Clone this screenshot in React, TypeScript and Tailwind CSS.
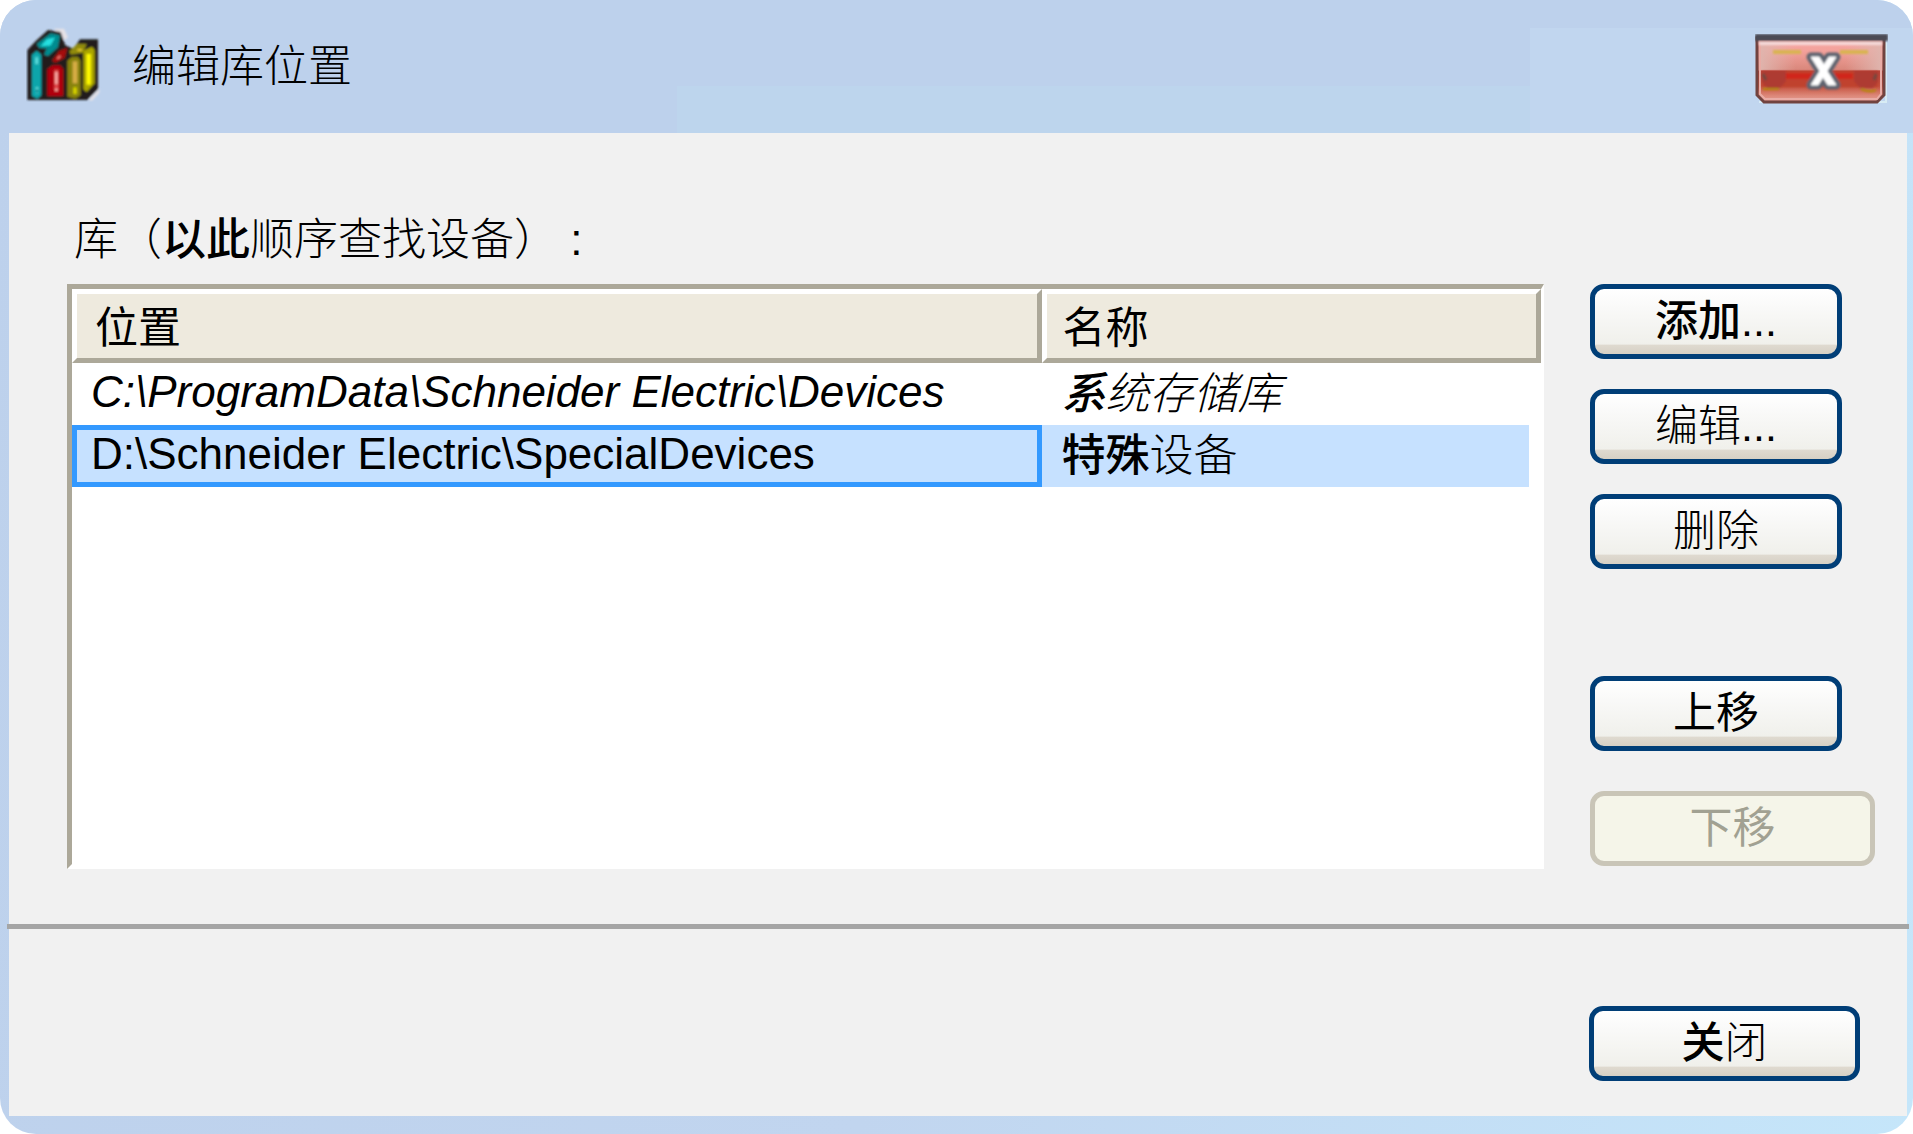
import type { ReactNode } from 'react';
import clsx from 'clsx';

interface Library {
  location: string;
  name: ReactNode;
  system?: boolean; // system repository, shown in italics
}

const LIBRARIES: Library[] = [
  {
    location: 'C:\\ProgramData\\Schneider Electric\\Devices',
    name: <><Strong>系</Strong>统存储库</>,
    system: true,
  },
  {
    location: 'D:\\Schneider Electric\\SpecialDevices',
    name: <><Strong>特殊</Strong>设备</>,
  },
];

const SELECTED = 1;

function Strong({ children }: { children: ReactNode }) {
  return <span className="font-medium">{children}</span>;
}

function BooksIcon() {
  return (
    <svg width="76" height="76" viewBox="34 18 228 228" aria-hidden="true">
      <defs>
        <filter id="soft" x="-10%" y="-10%" width="120%" height="120%">
          <feGaussianBlur stdDeviation="2.5" />
        </filter>
      </defs>
      <g filter="url(#soft)">
        <path d="M118 26h30l12 26-10 8zM222 240l32-34v12l-22 24z" fill="#e6e2e6" />
        <path d="M38 90l26-28 36-32 38 6 14 40 24 10 20-28h54v150l-32 32H38z" fill="#211f1a" />
        {/* teal book */}
        <path d="M66 72l42-32 28 6-6 36-30 26-12-4 8-18-22-2z" fill="#068c90" />
        <path d="M84 76l14-16 18-4-10 18z" fill="#25e0e0" stroke="#25e0e0" strokeWidth="5" />
        <path d="M52 104l14-12 14 12v122l-12 10-16-8z" fill="#07a5aa" />
        <path d="M66 112v20M67 202v18" stroke="#65e8e5" strokeWidth="7" />
        <path d="M67 206l4 6-4 8-4-8z" fill="#077b84" />
        {/* red book */}
        <path d="M112 122l22-30 24-8-8 30-28 14z" fill="#a40808" />
        <path d="M128 116l9-8" stroke="#f47b72" strokeWidth="6" />
        <path d="M98 148l16-12h22l10 12v80H98z" fill="#b00508" />
        <path d="M125 150v62" stroke="#e2494b" strokeWidth="12" />
        <path d="M125 156v36M125 206v8" stroke="#ffc0b9" strokeWidth="6" />
        {/* yellow books */}
        <path d="M164 94l24-22h28l-10 26-38 6z" fill="#918b08" />
        <path d="M188 90h14" stroke="#e0c42c" strokeWidth="7" />
        <path d="M158 122l14-12h18l8 12v104l-16 10-24-6z" fill="#88830b" />
        <path d="M181 124v66" stroke="#d7ad45" strokeWidth="14" />
        <path d="M181 202v20" stroke="#d9d600" strokeWidth="10" />
        <path d="M206 92l26-12 8 10v100l-24 26-10-8z" fill="#aaa501" />
        <path d="M222 102v92" stroke="#fff900" strokeWidth="13" />
      </g>
    </svg>
  );
}

function CloseGlyph() {
  return (
    <svg width="133" height="70" viewBox="0 0 133 70" aria-hidden="true">
      <defs>
        <linearGradient id="gloss" x1="0" y1="0" x2="0" y2="1">
          <stop offset="0" stopColor="#f8a8a6" />
          <stop offset=".2" stopColor="#f3a19b" />
          <stop offset=".5" stopColor="#d9877b" />
          <stop offset=".52" stopColor="#b84136" />
          <stop offset=".75" stopColor="#c4503d" />
          <stop offset=".9" stopColor="#dc8778" />
          <stop offset="1" stopColor="#e6a19a" />
        </linearGradient>
        <linearGradient id="edge" x1="0" y1="0" x2="1" y2="0">
          <stop offset="0" stopColor="#dfb5ae" />
          <stop offset=".3" stopColor="#dfb5ae" stopOpacity="0" />
          <stop offset=".7" stopColor="#dfb5ae" stopOpacity="0" />
          <stop offset="1" stopColor="#dfb5ae" />
        </linearGradient>
        <filter id="haze" x="-10%" y="-10%" width="120%" height="120%">
          <feGaussianBlur stdDeviation=".8" />
        </filter>
      </defs>
      <path d="M131 8v60H4" fill="none" stroke="#d8ecf4" strokeWidth="2" />
      <path d="M2 4h127v57l-7 7H9l-7-7z" fill="url(#gloss)" stroke="#71433f" strokeWidth="3" />
      <path d="M4 8h123v28H4z" fill="url(#edge)" />
      <path d="M5 8v52l5 5h112l4-5V8" fill="none" stroke="#e9aca5" strokeWidth="2" />
      <g filter="url(#haze)">
        <path d="M0 0h133v7H0z" fill="#4b4c54" />
        <path d="M4 8h123v3H4z" fill="#f6dcdc" />
        <path d="M18 18h28M85 18h28" stroke="#d9b451" strokeWidth="4" />
        <path d="M7 37h116v16H7z" fill="#c0432f" />
        <path d="M30 39h68v6H30z" fill="#d0281d" />
        <path d="M7 37h24v10l-6 7H12l-5-6zM123 37H99v10l6 7h13l5-6z" fill="#ae3b31" />
        <path d="M8 55h16M106 55q10 4 15 1" fill="none" stroke="#b08d00" strokeWidth="2" />
        <path d="M8 40l3 6M121 40l-2 6" stroke="#70493f" strokeWidth="3" />
        <path
          d="M56 23h8l5 8 5-8h7l-9 14 9 14h-8l-5-8-5 8h-7l9-14z"
          fill="#5f6470"
          stroke="#5f6470"
          strokeWidth="9"
          strokeLinejoin="round"
        />
        <path
          d="M56 23h8l5 8 5-8h7l-9 14 9 14h-8l-5-8-5 8h-7l9-14z"
          fill="#fff"
          stroke="#fff"
          strokeWidth="1"
        />
      </g>
    </svg>
  );
}

function DialogButton({ children, className, disabled }: {
  children: ReactNode;
  className?: string;
  disabled?: boolean;
}) {
  return (
    <button
      type="button"
      disabled={disabled}
      className={clsx(
        'h-[75px] rounded-[14px] border-5 pb-px text-[43px] leading-none',
        disabled
          ? 'border-[#c9c5b7] bg-[#f5f5e9] text-[#a1a192]'
          : 'border-[#003e77] bg-[linear-gradient(#ffffff,#f9f9f8_30%,#f0f0eb_85%,#dfdad0_86%,#d6d0c4)]',
        className,
      )}
    >
      {children}
    </button>
  );
}

export default function App() {
  return (
    <div className="min-h-screen bg-white font-['Liberation_Sans','Noto_Sans_CJK_SC',sans-serif] font-light text-black" lang="zh-CN">
      <div className="flex min-h-screen flex-col rounded-[36px] bg-[linear-gradient(100deg,#bdd1ec,#c1d5ef_50%,#c5e6fa)] pr-1.5 pb-[18px] pl-[9px]">
        {/* Title bar */}
        <header className="-mr-1.5 -ml-[9px] flex h-[133px] rounded-t-[36px] bg-[linear-gradient(#c1d6ef,#c1d6ef),linear-gradient(#bdd5ed,#bdd5ed),linear-gradient(#bdd1ec,#bdd1ec)] bg-[size:383px_105px,1236px_47px,100%_100%] bg-[position:right_bottom] bg-no-repeat pr-[25px] pl-[26px]">
          <div className="flex flex-1 gap-[30px] pt-[26px]">
            <BooksIcon />
            <h1 className="pt-2 text-[44px] leading-[66px] font-light">编辑库位置</h1>
          </div>
          <button type="button" aria-label="关闭窗口" className="mt-[34px] h-[70px]">
            <CloseGlyph />
          </button>
        </header>

        <main className="flex flex-1 flex-col bg-[#f1f1f1]">
          <div className="flex flex-1 flex-col pr-8 pb-[55px] pl-[58px]">
            <h2 id="libraries" className="pt-[75px] pb-3 pl-[7px] text-[44px] leading-[64px] font-light">
              库（<Strong>以此</Strong>顺序查找设备） :
            </h2>

            <div className="flex flex-1 gap-[46px]">
              <div className="flex-1 border-5 border-r-[3px] border-white border-t-[#aca899] border-l-[#aca899] bg-white">
                <table aria-labelledby="libraries" className="w-full table-fixed border-separate border-spacing-0 text-left text-[44px] leading-none whitespace-nowrap">
                  <colgroup>
                    <col className="w-[66%]" />
                    <col />
                  </colgroup>
                  <thead>
                    <tr className="bg-[#eeeade] text-[43px]">
                      <th className="h-[74px] border-5 border-[#aca899] border-t-white border-l-white pt-1 pl-4.5 font-normal">位置</th>
                      <th className="h-[74px] border-5 border-[#aca899] border-t-white border-l-white pt-1 pl-4 font-normal">名称</th>
                    </tr>
                  </thead>
                  <tbody>
                    {LIBRARIES.map((lib, i) => (
                      <tr key={lib.location} className={clsx(lib.system && 'italic')}>
                        <td className="p-0">
                          <div className={clsx('flex h-[62px] items-center border-5 pb-1 pl-3.5', i === SELECTED ? 'border-[#3399ff] bg-[#c6e1ff]' : 'border-transparent')}>
                            {lib.location}
                          </div>
                        </td>
                        <td className="p-0">
                          <div className={clsx('mr-3 flex h-[62px] items-center pl-5', i === SELECTED && 'bg-[#c6e1ff]')}>
                            <span>{lib.name}</span>
                          </div>
                        </td>
                      </tr>
                    ))}
                  </tbody>
                </table>
              </div>

              <div className="flex w-[285px] flex-col items-start gap-[30px]">
                <DialogButton className="w-[252px]"><Strong>添加</Strong>...</DialogButton>
                <DialogButton className="w-[252px]">编辑...</DialogButton>
                <DialogButton className="w-[252px]">删除</DialogButton>
                <div className="mt-[77px] flex w-full flex-col items-start gap-10">
                  <DialogButton className="w-[252px] font-normal">上移</DialogButton>
                  <DialogButton className="w-full font-normal" disabled>下移</DialogButton>
                </div>
              </div>
            </div>
          </div>

          <footer className="-mx-0.5 flex justify-end border-t-5 border-[#a5a5a5] pt-[77px] pr-[49px] pb-[35px]">
            <DialogButton className="w-[271px]"><Strong>关</Strong>闭</DialogButton>
          </footer>
        </main>
      </div>
    </div>
  );
}
